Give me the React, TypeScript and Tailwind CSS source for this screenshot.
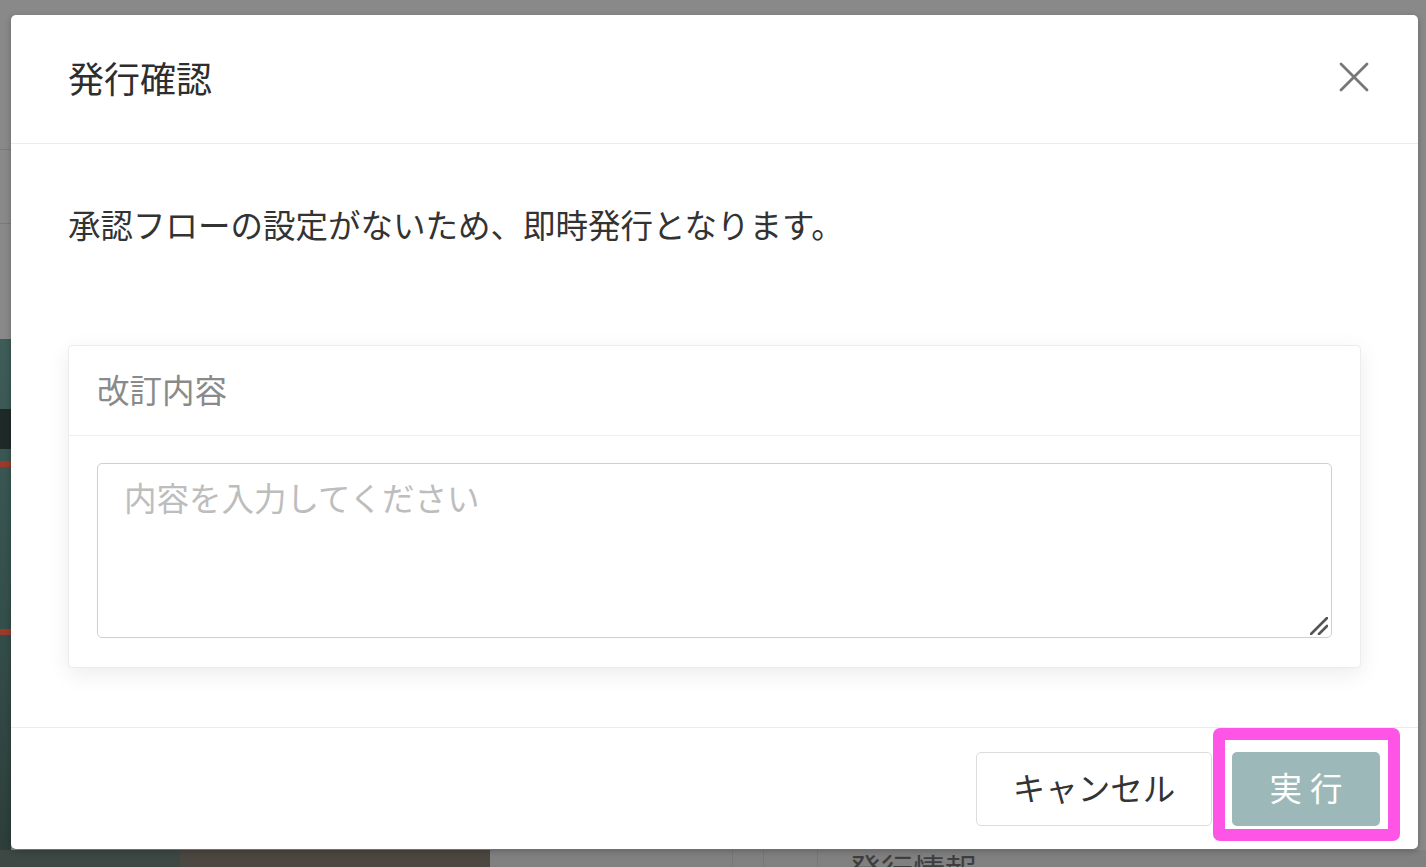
function Backdrop() {
  // the dimmed page behind the modal
  return (
    <div className="absolute inset-0 flex flex-col bg-[#898989]">
      <div className="flex flex-1">
        <div className="flex w-[11px] flex-col">
          <div className="h-[150px] border-b border-[#7a7a7a]" />
          <div className="h-[74px] border-b border-[#7a7a7a]" />
          <div className="h-[115px]" />
          <div className="flex flex-1 flex-col bg-gradient-to-b from-[#3e5c58] via-[#35504c] to-[#2d3e3a]">
            <div className="mt-[70px] h-[40px] bg-[#1f2a28]" />
            <div className="mt-[12px] h-[6px] bg-[#9a3a2a]" />
            <div className="mt-[162px] h-[6px] bg-[#9a3a2a]" />
          </div>
        </div>
        <div className="flex-1" />
      </div>
      <div className="flex h-[17px]">
        <div className="w-[180px] bg-[#3d4844]" />
        <div className="w-[310px] bg-[#4c4640]" />
        <div className="flex flex-1 overflow-hidden bg-[#808080]">
          <div className="ml-[242px] w-[32px] border-x border-[#777]" />
          <div className="w-[54px] border-r border-[#777]" />
          <div className="ml-[31px] pt-[2px] text-[32px] leading-none text-[#3e3e3e]">発行情報</div>
        </div>
      </div>
    </div>
  );
}

function CloseIcon() {
  return (
    <svg width="30" height="30" viewBox="0 0 30 30">
      <path d="M2 2 L28 28 M28 2 L2 28" stroke="#777" strokeWidth="2.8" strokeLinecap="round" />
    </svg>
  );
}

function ResizeHandle() {
  return (
    <svg
      className="pointer-events-none absolute bottom-[3px] right-[4px]"
      width="18"
      height="18"
      viewBox="0 0 18 18"
    >
      <path d="M1 17 L17 1" stroke="#555" strokeWidth="2.6" strokeLinecap="round" />
      <path d="M9 17 L17 9" stroke="#555" strokeWidth="2.6" strokeLinecap="round" />
    </svg>
  );
}

export default function App() {
  return (
    <div
      className="relative h-[867px] w-[1426px] overflow-hidden"
      style={{ fontFamily: '"Noto Sans CJK JP", "Noto Sans", sans-serif' }}
    >
      <Backdrop />

      <div className="relative pt-[15px] pl-[11px]">
        <div className="w-[1407px] rounded-[5px] bg-white shadow-[0_2px_6px_rgba(0,0,0,0.25)]">
          {/* header */}
          <div className="flex h-[129px] items-center justify-between border-b border-[#ececec] pb-[4px] pl-[57px] pr-[49px]">
            <h2 className="text-[36px] font-normal leading-none text-[#2e2e2e]">発行確認</h2>
            <button type="button" className="flex items-center justify-center">
              <CloseIcon />
            </button>
          </div>

          {/* body */}
          <div className="px-[57px] pt-[56px] pb-[59px]">
            <p className="text-[32.5px] leading-[48px] text-[#333]">
              承認フローの設定がないため、即時発行となります。
            </p>

            <div className="mt-[97px] rounded-[4px] border border-[#ececec] bg-white shadow-[0_6px_22px_rgba(0,0,0,0.08)]">
              <div className="flex h-[90px] items-center border-b border-[#eeeeee] px-[28px] pb-[2px]">
                <span className="text-[32.5px] text-[#8a8a8a]">改訂内容</span>
              </div>
              <div className="px-[28px] pt-[27px] pb-[29px]">
                <div className="relative">
                  <textarea
                    placeholder="内容を入力してください"
                    className="block h-[175px] w-full resize-none rounded-[5px] border border-[#cfcfcf] px-[26px] pt-[8px] text-[32.5px] leading-[50px] text-[#333] outline-none placeholder:text-[#bdbdbd]"
                  />
                  <ResizeHandle />
                </div>
              </div>
            </div>
          </div>

          {/* footer */}
          <div className="flex items-center justify-end gap-[20px] border-t border-[#ececec] pt-[24px] pb-[23px] pr-[38px]">
            <button
              type="button"
              className="h-[74px] w-[236px] rounded-[5px] border border-[#dcdcdc] bg-white pb-[4px] text-[32.5px] text-[#333]"
            >
              キャンセル
            </button>
            <button
              type="button"
              className="h-[74px] w-[148px] rounded-[5px] bg-[#9db8b9] pb-[4px] pl-[8px] text-[32.5px] tracking-[8px] text-white"
            >
              実行
            </button>
          </div>
        </div>
      </div>

      {/* highlight annotation */}
      <div className="pointer-events-none absolute left-[1213px] top-[728px] h-[113px] w-[187px] rounded-[7px] border-[12px] border-[#ff55e6]" />
    </div>
  );
}
